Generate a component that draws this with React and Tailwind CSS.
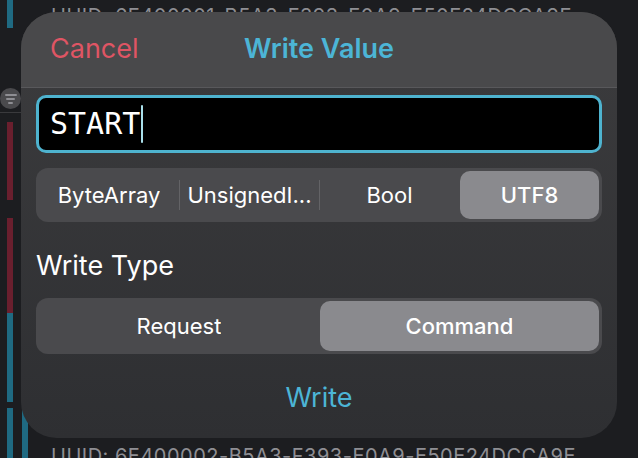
import { useState } from 'react'

// Hintergrund: Liste der Charakteristiken, darüber das Schreib-Sheet
const FONT = { fontFamily: 'Inter, "Noto Sans", sans-serif' }

function Segmente({ optionen, aktiv, hoehe, onWahl }) {
  return (
    <div className={`flex rounded-[12px] bg-[#4a4a4d] p-[3px] ${hoehe}`}>
      {optionen.map((o, i) => {
        const an = o === aktiv
        const trenner = i > 0 && optionen[i - 1] !== aktiv && !an
        return (
          <div key={o} className="flex min-w-0 flex-1 items-center">
            {i > 0 && (
              <span className={`h-[30px] w-px ${trenner ? 'bg-[#636366]' : 'bg-transparent'}`} />
            )}
            <button
              type="button"
              onClick={() => onWahl(o)}
              className={`flex h-full min-w-0 flex-1 items-center justify-center truncate rounded-[10px] px-1 text-[22px] text-white ${
                an ? 'bg-[#8a8a8e] font-medium' : ''
              }`}
            >
              <span className="truncate">{o}</span>
            </button>
          </div>
        )
      })}
    </div>
  )
}

export default function App() {
  const [format, setFormat] = useState('UTF8')
  const [typ, setTyp] = useState('Command')

  return (
    <div className="relative h-[458px] w-[638px] overflow-hidden bg-[#1c1d20]" style={FONT}>
      {/* Liste im Hintergrund */}
      <div className="flex h-full">
        <div className="flex w-[21px] shrink-0 flex-col">
          <span className="ml-[7px] h-[28px] w-[6px] bg-[#1f6a82]" />
          <div className="mt-[60px] flex h-[21px] w-[21px] flex-col items-center justify-center gap-[2px] rounded-full bg-[#4a4a4d]">
            <span className="h-[2px] w-[12px] rounded bg-[#8e8e93]" />
            <span className="h-[2px] w-[9px] rounded bg-[#8e8e93]" />
            <span className="h-[2px] w-[5px] rounded bg-[#8e8e93]" />
          </div>
          <span className="mt-[3px] h-px w-full bg-[#3a3a3d]" />
          <span className="ml-[7px] mt-[9px] h-[78px] w-[6px] bg-[#6a1f2e]" />
          <span className="ml-[7px] mt-[18px] h-[95px] w-[6px] bg-[#6a1f2e]" />
          <span className="ml-[7px] h-[89px] w-[6px] bg-[#1f6a82]" />
          <span className="ml-[7px] mt-[6px] h-[50px] w-[6px] bg-[#1f6a82]" />
        </div>
        <div className="flex min-w-0 flex-1 flex-col justify-between">
          <div className="pl-[30px] pt-[4px] text-[20px] leading-[24px] tracking-[0.5px] text-[#8e8e93]">
            UUID: 6E400001-B5A3-F393-E0A9-E50E24DCCA9E
          </div>
          <div className="flex items-end">
            <span className="ml-[1px] h-[50px] w-[6px] bg-[#1f6a82]" />
            <div className="-mb-[10px] pl-[23px] text-[20px] leading-[24px] tracking-[0.5px] text-[#8e8e93]">
              UUID: 6E400002-B5A3-F393-E0A9-E50E24DCCA9E
            </div>
          </div>
        </div>
      </div>

      {/* Sheet "Write Value" */}
      <div className="absolute left-[21px] top-[12px] flex h-[426px] w-[596px] flex-col overflow-hidden rounded-[36px] bg-gradient-to-b from-[#3c3c3e] to-[#2e2f32]">
        <div className="grid h-[76px] shrink-0 grid-cols-[1fr_auto_1fr] items-center border-b border-[#58585b] bg-[#49494b] px-[29px]">
          <button type="button" className="justify-self-start text-[27px] text-[#df5564]">
            Cancel
          </button>
          <div className="text-[27px] font-semibold text-[#4cb5d6]">Write Value</div>
          <span />
        </div>

        <div className="flex flex-col px-[15px] pt-[7px]">
          <div className="flex h-[58px] items-center rounded-[10px] border-[3px] border-[#4eb3cf] bg-black pl-[11px]">
            <span
              className="text-[30px] leading-none text-white"
              style={{ fontFamily: '"DejaVu Sans Mono", "Liberation Mono", monospace' }}
            >
              START
            </span>
            <span className="ml-[1px] h-[38px] w-[2px] rounded bg-[#a9dfea]" />
          </div>

          <div className="mt-[15px]">
            <Segmente
              optionen={['ByteArray', 'UnsignedI...', 'Bool', 'UTF8']}
              aktiv={format}
              hoehe="h-[54px]"
              onWahl={setFormat}
            />
          </div>

          <div className="mt-[29px] text-[27px] leading-[30px] text-white">Write Type</div>

          <div className="mt-[17px]">
            <Segmente optionen={['Request', 'Command']} aktiv={typ} hoehe="h-[56px]" onWahl={setTyp} />
          </div>

          <button type="button" className="mt-[24px] self-center text-[27px] text-[#4cb5d6]">
            Write
          </button>
        </div>
      </div>
    </div>
  )
}
